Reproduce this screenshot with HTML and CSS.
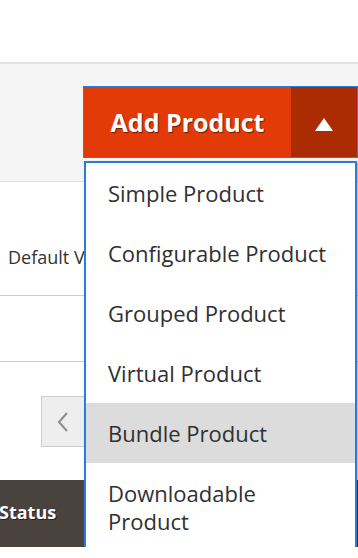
FILE: index.html
```html
<!DOCTYPE html>
<html lang="en">
<head>
  <meta charset="UTF-8" />
  <title>Products</title>
  <link rel="stylesheet" href="styles.css">
</head>
<body>
  <header class="page-header"></header>

  <section class="page-actions">
    <div class="add-product">
      <button class="add-main">Add Product</button>
      <button class="add-toggle">
        <svg width="18" height="13" viewBox="0 0 18 13"><polygon points="9,0 18,13 0,13" fill="#fff"/></svg>
      </button>

      <!-- open product type menu -->
      <ul class="add-menu">
        <li>Simple Product</li>
        <li>Configurable Product</li>
        <li>Grouped Product</li>
        <li>Virtual Product</li>
        <li class="hover">Bundle Product</li>
        <li>Downloadable Product</li>
      </ul>
    </div>
  </section>

  <div class="grid">
    <div class="grid-row filters">
      <span class="view-name">Default View</span>
    </div>
    <div class="grid-row"></div>
    <div class="pager">
      <button class="pager-prev">
        <svg width="14" height="22" viewBox="0 0 14 22"><polyline points="11,2 3,11 11,20" fill="none" stroke="#8c8c8c" stroke-width="2"/></svg>
      </button>
    </div>
    <div class="grid-head">
      <span>Status</span>
    </div>
  </div>
</body>
</html>
```

FILE: styles.css
```css
body {
  margin: 0;
  font-family: "Open Sans", "DejaVu Sans", sans-serif;
  color: #303030;
  background: #fff;
  overflow: hidden;
}
.page-header {
  height: 62px;
  border-bottom: 2px solid #e3e3e3;
}
.page-actions {
  height: 117px;
  background: #f5f5f5;
  display: flex;
  justify-content: flex-end;
  align-items: flex-start;
  padding-top: 22px;
  box-sizing: border-box;
}
.add-product {
  position: relative;
  display: flex;
  height: 72px;
  border: 1px solid #2b7bd8;
  box-sizing: border-box;
}
.add-product button {
  border: none;
  margin: 0;
  padding: 0;
  cursor: pointer;
}
.add-main {
  width: 207px;
  background: #e33b07;
  color: #fff;
  font-family: "Open Sans", sans-serif;
  font-size: 25px;
  font-weight: bold;
  text-shadow: 1px 1px 1px rgba(80, 20, 0, 0.8);
  padding-top: 1px;
}
.add-toggle {
  width: 66px;
  background: #ab2c03;
  display: flex;
  align-items: center;
  justify-content: center;
  padding-top: 4px !important;
}
.add-menu {
  position: absolute;
  top: 74px;
  left: 0;
  width: 273px;
  margin: 0;
  padding: 0;
  list-style: none;
  background: #fff;
  border: 2px solid #2b7bd8;
  box-sizing: border-box;
  box-shadow: 1px 1px 2px rgba(0, 0, 0, 0.35);
  z-index: 2;
}
.add-menu li {
  padding: 16px 22px;
  font-size: 22px;
  line-height: 28px;
  color: #303030;
}
.add-menu li.hover {
  background: #dcdcdc;
}
.grid {
  border-top: 1px solid #e0e0e0;
}
.grid-row {
  height: 65px;
  border-bottom: 1px solid #cccccc;
}
.grid-row.filters {
  height: 114px;
  padding: 63px 0 0 8px;
  box-sizing: border-box;
}
.view-name {
  font-size: 18px;
  line-height: 24px;
  color: #333;
  white-space: nowrap;
}
.pager {
  padding: 34px 0 0 41px;
}
.pager-prev {
  width: 52px;
  height: 51px;
  background: #eeeeee;
  border: 1px solid #cccccc;
  padding: 0 0 0 14px;
  display: flex;
  align-items: center;
  justify-content: flex-start;
}
.grid-head {
  margin-top: 33px;
  height: 67px;
  background: #4a423c;
  color: #fff;
  font-size: 18px;
  font-weight: bold;
  display: flex;
  align-items: center;
  padding-bottom: 4px;
  box-sizing: border-box;
  text-shadow: 1px 1px 0 rgba(0, 0, 0, 0.5);
}
.grid-head span {
  margin-left: -1px;
}
```
